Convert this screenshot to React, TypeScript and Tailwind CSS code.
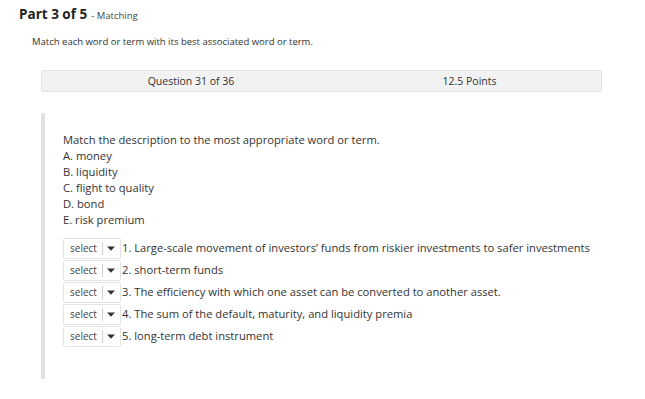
import React from "react";

const items = [
  "1. Large-scale movement of investors’ funds from riskier investments to safer investments",
  "2. short-term funds",
  "3. The efficiency with which one asset can be converted to another asset.",
  "4. The sum of the default, maturity, and liquidity premia",
  "5. long-term debt instrument",
];

function Select() {
  return (
    <div className="flex items-center h-[21px] w-[58px] border border-[#e3e3e3] rounded-[2px] bg-white shrink-0">
      <span className="pl-[6px] w-[38px] text-[10px] text-[#444] leading-none">select</span>
      <span className="h-[13px] w-px bg-[#d0d0d0]" />
      <svg width="8" height="5" viewBox="0 0 8 5" className="ml-[4px]">
        <path d="M0 0.5 L8 0.5 L4 4.8 Z" fill="#333" />
      </svg>
    </div>
  );
}

export default function App() {
  return (
    <div className="w-[645px] h-[399px] bg-white text-[#333] font-['Open_Sans',sans-serif] relative overflow-hidden">
      <div className="pt-[4px] pl-[19px] flex items-baseline">
        <span className="text-[13.5px] font-bold text-[#222]">Part 3 of 5</span>
        <span className="text-[9.5px] ml-[4px] text-[#444]">- Matching</span>
      </div>
      <div className="pl-[32px] mt-[11px] text-[9.5px] text-[#333]">
        Match each word or term with its best associated word or term.
      </div>
      <div className="ml-[41px] mt-[20px] w-[561px] h-[22px] bg-[#f2f2f2] border border-[#e2e2e2] rounded-[3px] grid grid-cols-[298px_1fr] items-center text-[10.5px] text-[#333]">
        <div className="text-center pt-[2px]">Question 31 of 36</div>
        <div className="text-center pr-[2px] pt-[2px]">12.5 Points</div>
      </div>
      <div className="ml-[41px] mt-[21px] border-l-[4px] border-[#e2e2e2] h-[266px] pl-[18px] pt-[19px]">
        <div className="text-[11.2px] leading-[16px] text-[#333]">
          <div>Match the description to the most appropriate word or term.</div>
          <div>A. money</div>
          <div>B. liquidity</div>
          <div>C. flight to quality</div>
          <div>D. bond</div>
          <div>E. risk premium</div>
        </div>
        <div className="mt-[10px] flex flex-col gap-px">
          {items.map((t) => (
            <div key={t} className="flex items-center">
              <Select />
              <span className="ml-[1px] text-[11.2px] text-[#333] whitespace-nowrap">{t}</span>
            </div>
          ))}
        </div>
      </div>
    </div>
  );
}
